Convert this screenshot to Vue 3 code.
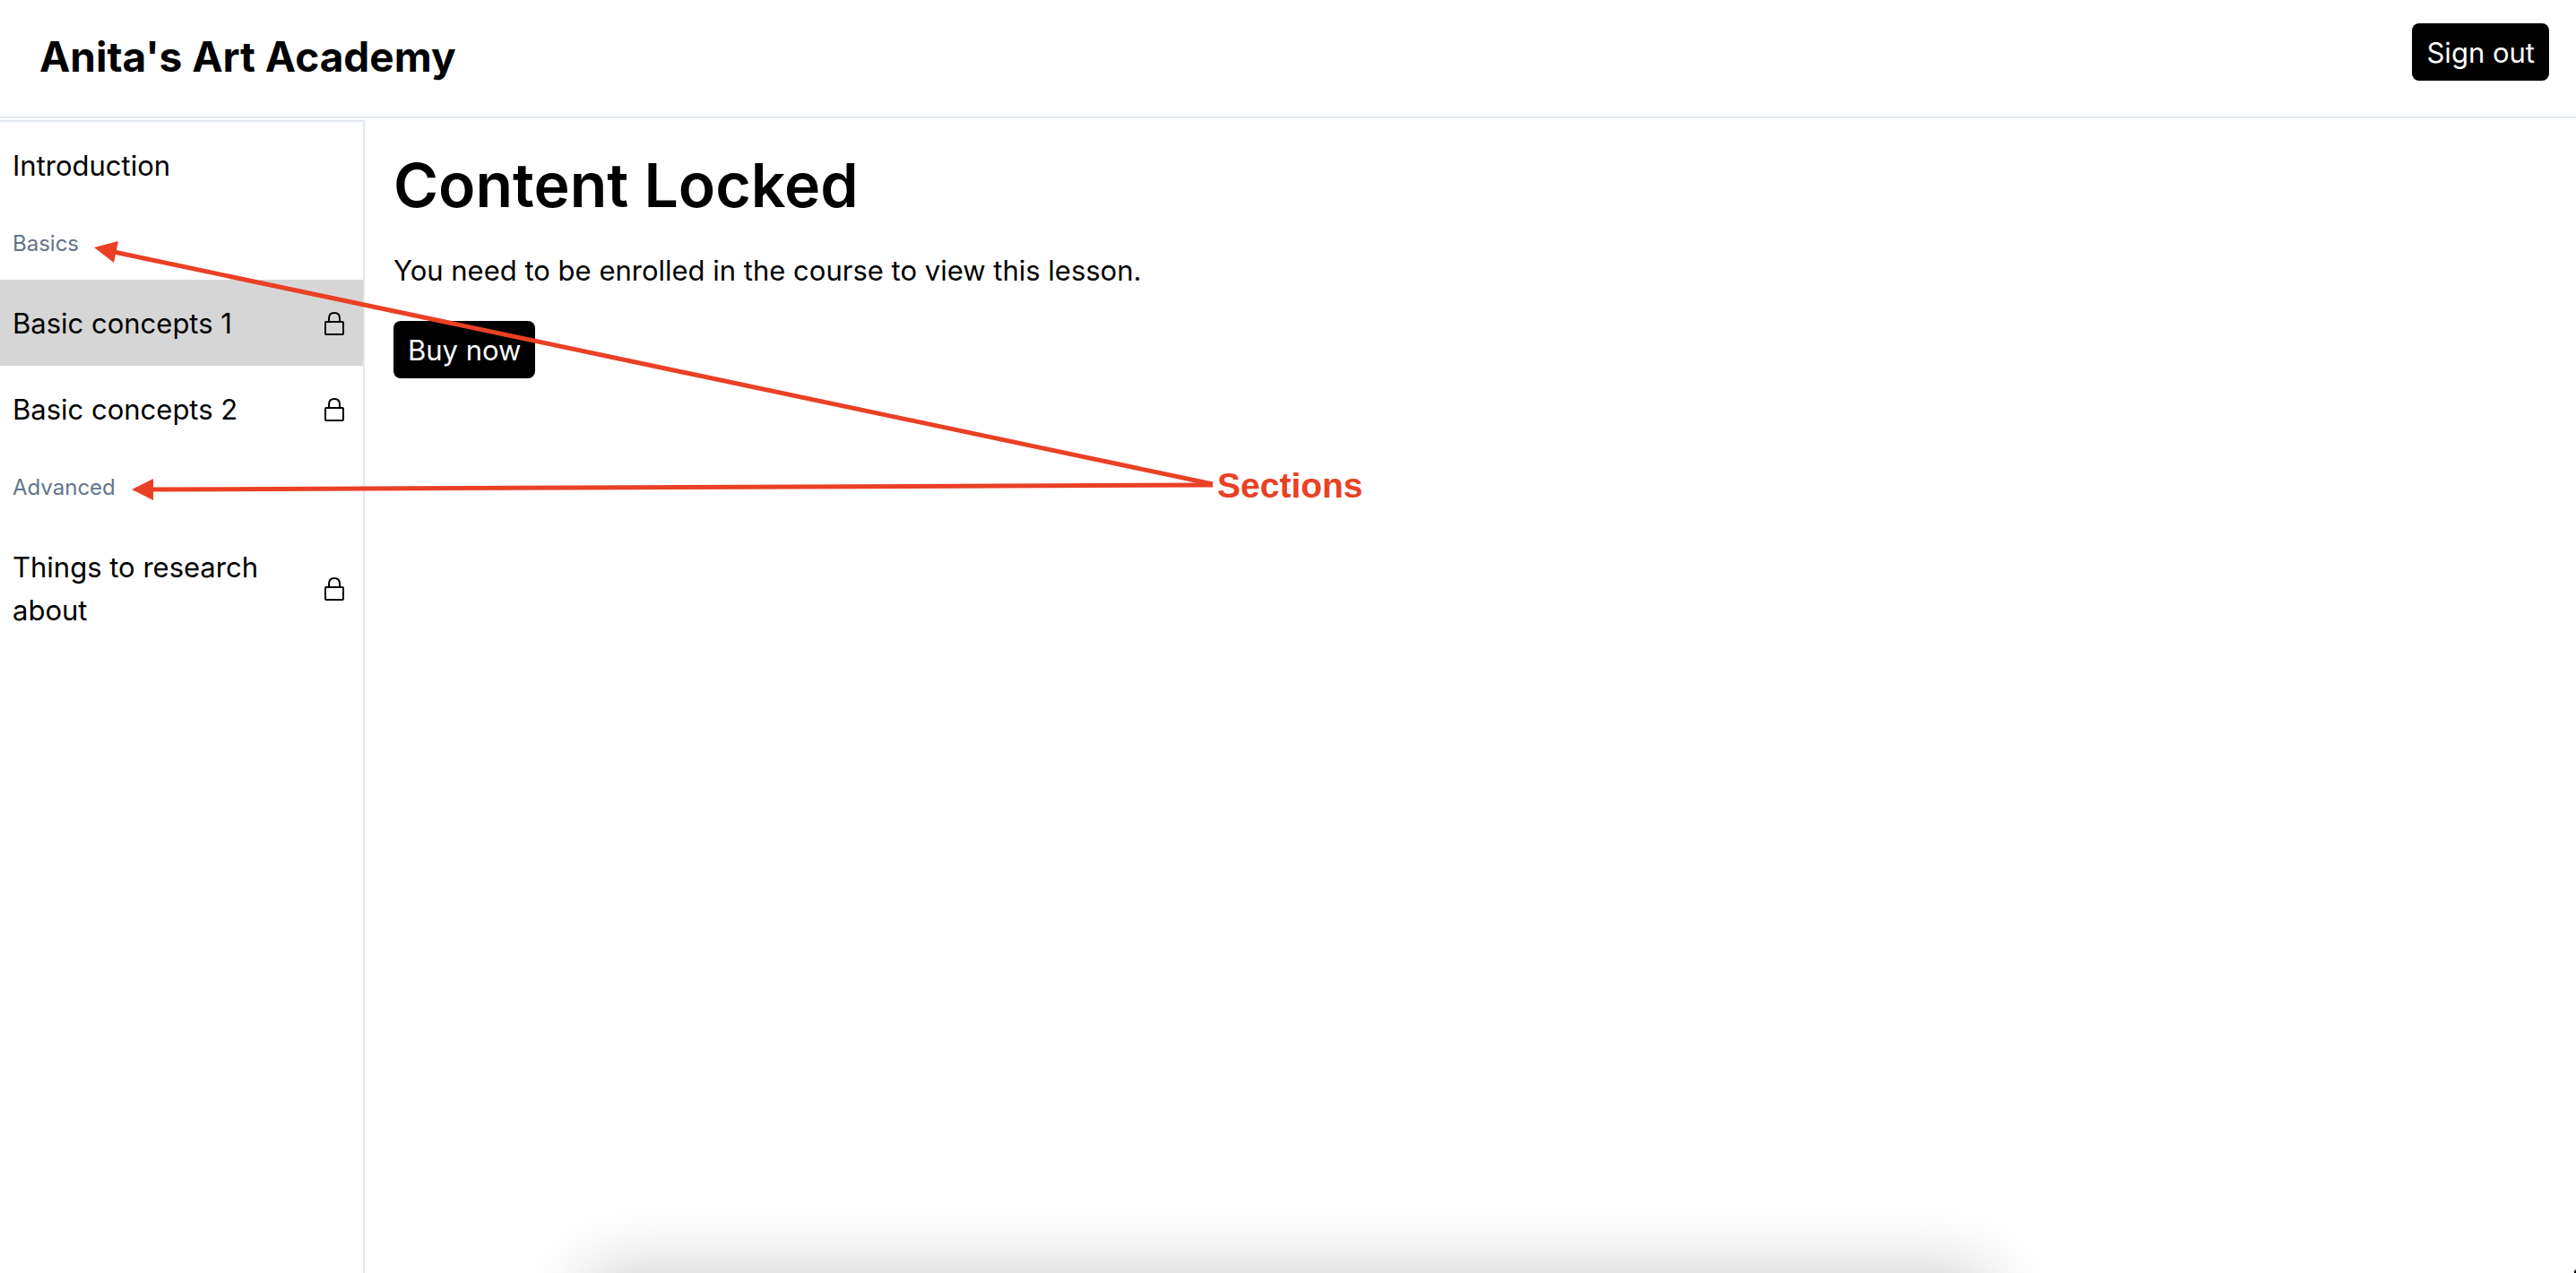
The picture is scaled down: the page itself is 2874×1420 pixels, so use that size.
<script setup>
const groups = [
  { title: '', lessons: [{ name: 'Introduction', locked: false }] },
  {
    title: 'Basics',
    lessons: [
      { name: 'Basic concepts 1', locked: true, active: true },
      { name: 'Basic concepts 2', locked: true },
    ],
  },
  { title: 'Advanced', lessons: [{ name: 'Things to research about', locked: true }] },
]
</script>

<template>
  <div class="page">
    <header class="topbar">
      <a class="brand" href="#">Anita's Art Academy</a>
      <button type="button" class="btn">Sign out</button>
    </header>

    <div class="body">
      <nav class="sidebar" aria-label="Lessons">
        <section v-for="group in groups" :key="group.title">
          <h2 v-if="group.title" class="group-title">{{ group.title }}</h2>
          <a
            v-for="lesson in group.lessons"
            :key="lesson.name"
            href="#"
            class="lesson"
            :class="{ active: lesson.active }"
          >
            <span>{{ lesson.name }}</span>
            <svg v-if="lesson.locked" class="lock" viewBox="0 0 15 15" fill="none" stroke="currentColor" aria-hidden="true">
              <rect x="2.5" y="6.5" width="10" height="7" rx="0.5" />
              <path d="M4.5 6.5V4.6C4.5 2.6 5.6 1.5 7.5 1.5S10.5 2.6 10.5 4.6V6.5" />
            </svg>
          </a>
        </section>
      </nav>

      <main class="content">
        <h1>Content Locked</h1>
        <p>You need to be enrolled in the course to view this lesson.</p>
        <button type="button" class="btn">Buy now</button>
      </main>
    </div>

    <!-- Callout pointing at the section titles -->
    <svg class="arrows" width="1360" height="600" viewBox="0 0 1360 600" aria-hidden="true">
      <g stroke="#ea4025" stroke-width="5">
        <path d="M127 281L1353 540" />
        <path d="M168 546L1353 541" />
      </g>
      <g fill="#ea4025">
        <path d="M105 276L132 269L127 293Z" />
        <path d="M147 546L171 534V558Z" />
      </g>
    </svg>
    <span class="callout">Sections</span>

    <div class="shade" aria-hidden="true"><div class="shade-source"></div></div>
    <svg class="corner" width="2" height="4" viewBox="0 0 2 4" aria-hidden="true"><path d="M2 0V4H0V2Z" /></svg>
  </div>
</template>

<style>
body {
  margin: 0;
  background: #fff;
}
</style>

<style scoped>
.page {
  position: relative;
  display: flex;
  flex-direction: column;
  gap: 2px;
  min-height: 100vh;
  font: 400 31px/48px Inter, sans-serif;
  color: #000;
}
.topbar {
  display: flex;
  justify-content: space-between;
  align-items: flex-start;
  padding: 26px 30px 35px 44px;
  border-bottom: 2px solid #e2e8f0;
}
.brand {
  padding-top: 5px;
  font-size: 46px;
  line-height: 64px;
  font-weight: 700;
  color: inherit;
  text-decoration: none;
}
.btn {
  padding: 9px 16px 7px;
  border: 0;
  border-radius: 8px;
  background: #000;
  color: #fff;
  font: inherit;
}
.body {
  flex: 1;
  display: flex;
}
.sidebar {
  box-sizing: border-box;
  flex: none;
  width: 407px;
  border: solid #e2e8f0;
  border-width: 2px 2px 0 0;
}
.group-title {
  margin: 0;
  padding: 24px 14px;
  font-size: 24px;
  line-height: 32px;
  font-weight: 400;
  color: #64748b;
}
.lesson {
  display: flex;
  align-items: center;
  justify-content: space-between;
  gap: 32px;
  padding: 25px 17px 23px 14px;
  color: inherit;
  text-decoration: none;
}
.lesson.active {
  background: #d6d6d6;
}
.lock {
  flex: none;
  width: 30px;
  height: 30px;
}
.content {
  flex: 1;
  display: flex;
  flex-direction: column;
  align-items: flex-start;
  gap: 32px;
  padding: 32px;
}
h1 {
  margin: 0;
  font-size: 68px;
  line-height: 80px;
  font-weight: 600;
}
p {
  margin: 0;
}
.arrows {
  position: absolute;
  top: 0;
  left: 0;
  pointer-events: none;
}
.callout {
  position: absolute;
  top: 518px;
  left: 1358px;
  font: 700 39px/48px "Liberation Sans", sans-serif;
  color: #ea4025;
}
.shade {
  position: absolute;
  left: 0;
  right: 0;
  bottom: 0;
  height: 120px;
  overflow: hidden;
  pointer-events: none;
}
.shade-source {
  height: 200px;
  margin: 120px 656px 0;
  box-shadow: 0 0 80px rgba(0, 0, 0, 0.22);
}
.corner {
  position: absolute;
  right: 0;
  bottom: 0;
}
</style>
